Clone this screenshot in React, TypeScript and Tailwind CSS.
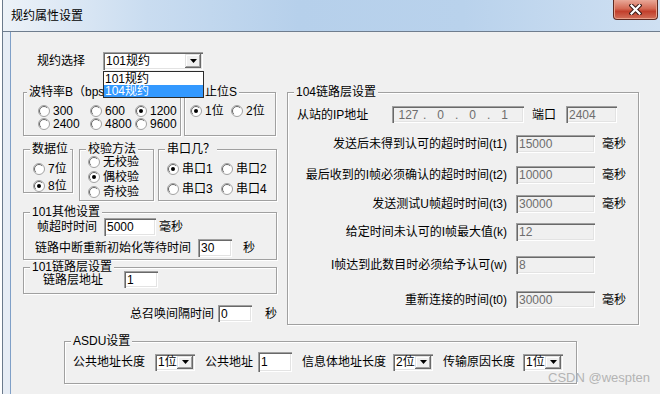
import type { ReactNode } from "react";

// 經典 Win 樣式：凹陷邊框 / 凸起按鈕
const SUNKEN =
  "shadow-[inset_1px_1px_0_#a0a0a0,inset_2px_2px_0_#696969,inset_-1px_-1px_0_#ffffff,inset_-2px_-2px_0_#e3e3e3]";
const RAISED =
  "bg-[#f0f0f0] shadow-[inset_-1px_-1px_0_#696969,inset_1px_1px_0_#e3e3e3,inset_-2px_-2px_0_#a0a0a0,inset_2px_2px_0_#ffffff]";

function Dot({ on }: { on?: boolean }) {
  return (
    <svg width="12" height="12" viewBox="0 0 12 12" className="shrink-0">
      <circle cx="6" cy="6" r="5.5" fill="#fff" stroke="#a0a0a0" />
      <path d="M2.8 9.2A4.5 4.5 0 0 1 9.2 2.8" fill="none" stroke="#696969" />
      {on && <circle cx="6" cy="6" r="2" fill="#000" />}
    </svg>
  );
}

function Radio({ label, on }: { label: string; on?: boolean }) {
  return (
    <div className="flex items-center h-[13px]">
      <Dot on={on} />
      <span className="ml-[3px] whitespace-nowrap">{label}</span>
    </div>
  );
}

function Group({
  title,
  className,
  legendLeft = "left-[6px]",
  children,
}: {
  title: string;
  className: string;
  legendLeft?: string;
  children?: ReactNode;
}) {
  return (
    <div
      className={`relative border border-[#a0a0a0] shadow-[inset_1px_1px_0_#fff,1px_1px_0_#fff] ${className}`}
    >
      <span
        className={`absolute ${legendLeft} -top-[7px] bg-[#f0f0f0] px-[2px] leading-[12px] whitespace-nowrap`}
      >
        {title}
      </span>
      {children}
    </div>
  );
}

function Field({ value, disabled, className }: { value: string; disabled?: boolean; className: string }) {
  return (
    <div
      className={`${SUNKEN} ${
        disabled ? "bg-[#f0f0f0] text-[#6d6d6d]" : "bg-white"
      } flex items-center pl-[3px] shrink-0 ${className}`}
    >
      {value}
    </div>
  );
}

function Arrow() {
  return (
    <svg width="7" height="4" viewBox="0 0 7 4">
      <polygon points="0,0 7,0 3.5,4" fill="#000" />
    </svg>
  );
}

function Combo({ value, className }: { value: string; className: string }) {
  return (
    <div className={`${SUNKEN} bg-white flex p-[2px] shrink-0 ${className}`}>
      <span className="flex-1 flex items-center pl-[1px] whitespace-nowrap">{value}</span>
      <div className={`${RAISED} w-[16px] flex items-center justify-center`}>
        <Arrow />
      </div>
    </div>
  );
}

function TimeRow({
  label,
  value,
  unit,
  mt,
  h = "h-[18px]",
}: {
  label: string;
  value: string;
  unit?: string;
  mt: string;
  h?: string;
}) {
  return (
    <div className={`flex items-center ${mt}`}>
      <span className="w-[219px] text-right whitespace-nowrap">{label}</span>
      <Field value={value} disabled className={`ml-[9px] w-[79px] ${h}`} />
      {unit && <span className="ml-[7px]">{unit}</span>}
    </div>
  );
}

export default function App() {
  return (
    <div className="w-[660px] h-[394px] overflow-hidden bg-[#f0f0f0] relative flex font-['Liberation_Sans','Noto_Sans_CJK_SC',sans-serif] text-[12px] leading-[14px] text-black">
      {/* 視窗左框 */}
      <div className="w-[3px] bg-white border-r border-[#6b7a8c]" />

      <div className="flex-1 flex flex-col">
        {/* 標題列 */}
        <div className="h-[32px] flex items-start justify-between border-b border-[#6f7d8e] bg-[linear-gradient(to_right,#edf2f8_0%,#c9dcf0_22%,#b6d0eb_45%,#b9d2ec_70%,#cfe0f2_100%)]">
          <span className="ml-[8px] mt-[9px] text-[12px] leading-[14px]">规约属性设置</span>
          <div className="mr-[2px] w-[45px] h-[20px] rounded-b-[4px] border border-t-0 border-[#5e2a22] bg-[linear-gradient(to_bottom,#e9a898_0%,#d46a55_45%,#c23f2c_60%,#d2705a_100%)] shadow-[inset_0_-1px_0_#e8a08a,inset_1px_0_0_#e8a08a,inset_-1px_0_0_#e8a08a] flex items-center justify-center">
            <svg width="13" height="11" viewBox="0 0 13 11">
              <path d="M2.5 1.5L10.5 9.5M10.5 1.5L2.5 9.5" stroke="#3a1a16" strokeWidth="4.2" strokeLinecap="square" />
              <path d="M2.5 1.5L10.5 9.5M10.5 1.5L2.5 9.5" stroke="#fff" strokeWidth="2.2" strokeLinecap="square" />
            </svg>
          </div>
        </div>

        <div className="flex-1 flex">
          <div className="w-[7px] bg-[#e7edf5]" />
          <div className="flex-1 border-l border-[#7f9fc7]">
            {/* 規約選擇 */}
            <div className="mt-[20px] ml-[26px] flex items-center h-[18px]">
              <span className="w-[66px]">规约选择</span>
              <div className="relative">
                <Combo value="101规约" className="w-[100px] h-[18px]" />
                <div className="absolute left-0 top-[19px] z-10 w-[101px] border border-[#2b2b2b] bg-white">
                  <div className="h-[13px] pl-[1px] flex items-center">101规约</div>
                  <div className="h-[12px] pl-[1px] flex items-center bg-[#3399ff] text-white">104规约</div>
                </div>
              </div>
            </div>

            <div className="mt-[22px] flex items-start">
              {/* 左欄 */}
              <div className="ml-[12px] w-[254px] flex flex-col">
                <div className="flex gap-[3px]">
                  <Group title="波特率B（bps" legendLeft="left-[3px]" className="w-[158px] h-[44px] pt-[11px] pl-[14px]">
                    <div className="grid grid-cols-[52px_45px_1fr] auto-rows-[13px] items-center">
                      <Radio label="300" />
                      <Radio label="600" />
                      <Radio label="1200" on />
                      <Radio label="2400" />
                      <Radio label="4800" />
                      <Radio label="9600" />
                    </div>
                  </Group>
                  <Group title="止位S" legendLeft="left-[18px]" className="w-[92px] h-[44px] pt-[11px] pl-[5px]">
                    <div className="flex h-[13px] items-center">
                      <div className="w-[41px]">
                        <Radio label="1位" on />
                      </div>
                      <Radio label="2位" />
                    </div>
                  </Group>
                </div>

                <div className="mt-[13px] flex items-start">
                  <Group title="数据位" className="w-[50px] h-[44px] pt-[12px] pl-[9px] flex flex-col gap-[4px]">
                    <Radio label="7位" />
                    <Radio label="8位" on />
                  </Group>
                  <Group title="校验方法" className="ml-[6px] w-[75px] h-[52px] pt-[5px] pl-[8px] flex flex-col gap-[2px]">
                    <Radio label="无校验" />
                    <Radio label="偶校验" on />
                    <Radio label="奇校验" />
                  </Group>
                  <Group title="串口几？" className="ml-[4px] w-[119px] h-[52px] pt-[12px] pl-[8px]">
                    <div className="grid grid-cols-[54px_1fr] gap-y-[7px]">
                      <Radio label="串口1" on />
                      <Radio label="串口2" />
                      <Radio label="串口3" />
                      <Radio label="串口4" />
                    </div>
                  </Group>
                </div>

                <Group title="101其他设置" className="mt-[11px] h-[48px] pt-[5px]">
                  <div className="flex items-center pl-[13px]">
                    <span className="w-[67px]">帧超时时间</span>
                    <Field value="5000" className="w-[52px] h-[18px]" />
                    <span className="ml-[3px]">毫秒</span>
                  </div>
                  <div className="flex items-center pl-[11px] mt-[3px]">
                    <span className="w-[163px] whitespace-nowrap">链路中断重新初始化等待时间</span>
                    <Field value="30" className="w-[34px] h-[18px]" />
                    <span className="ml-[11px]">秒</span>
                  </div>
                </Group>

                <Group title="101链路层设置" className="mt-[7px] h-[27px] pt-[3px]">
                  <div className="flex items-center pl-[19px]">
                    <span className="w-[81px]">链路层地址</span>
                    <Field value="1" className="w-[34px] h-[17px]" />
                  </div>
                </Group>

                <div className="mt-[11px] flex items-center pl-[107px]">
                  <span className="w-[89px] whitespace-nowrap">总召唤间隔时间</span>
                  <Field value="0" className="w-[34px] h-[17px]" />
                  <span className="ml-[13px]">秒</span>
                </div>
              </div>

              {/* 右欄 104 */}
              <Group title="104链路层设置" className="ml-[10px] w-[352px] h-[233px] pt-[13px]">
                <div className="flex items-center pl-[9px]">
                  <span className="w-[95px] whitespace-nowrap">从站的IP地址</span>
                  <div className={`${SUNKEN} bg-[#f0f0f0] text-[#6d6d6d] w-[132px] h-[17px] flex items-center pl-[2px]`}>
                    <span className="w-[29px] text-center">127</span>
                    <span className="w-[3px]">.</span>
                    <span className="w-[29px] text-center">0</span>
                    <span className="w-[3px]">.</span>
                    <span className="w-[29px] text-center">0</span>
                    <span className="w-[3px]">.</span>
                    <span className="w-[29px] text-center">1</span>
                  </div>
                  <span className="ml-[8px]">端口</span>
                  <Field value="2404" disabled className="ml-[10px] w-[51px] h-[17px]" />
                </div>
                <TimeRow mt="mt-[12px]" label="发送后未得到认可的超时时间(t1)" value="15000" unit="毫秒" />
                <TimeRow mt="mt-[13px]" label="最后收到的I帧必须确认的超时时间(t2)" value="10000" unit="毫秒" />
                <TimeRow mt="mt-[11px]" label="发送测试U帧超时时间(t3)" value="30000" unit="毫秒" />
                <TimeRow mt="mt-[10px]" label="给定时间未认可的I帧最大值(k)" value="12" />
                <TimeRow mt="mt-[15px]" label="I帧达到此数目时必须给予认可(w)" value="8" />
                <TimeRow mt="mt-[17px]" h="h-[17px]" label="重新连接的时间(t0)" value="30000" unit="毫秒" />
              </Group>
            </div>

            {/* ASDU */}
            <Group title="ASDU设置" className="mt-[16px] ml-[53px] w-[513px] h-[43px] pt-[10px]">
              <div className="flex items-center pl-[8px] h-[20px]">
                <span className="w-[82px] whitespace-nowrap">公共地址长度</span>
                <Combo value="1位" className="w-[40px] h-[17px]" />
                <span className="ml-[10px] w-[53px] whitespace-nowrap">公共地址</span>
                <Field value="1" className="w-[34px] h-[20px]" />
                <span className="ml-[10px] w-[91px] whitespace-nowrap">信息体地址长度</span>
                <Combo value="2位" className="w-[40px] h-[17px]" />
                <span className="ml-[10px] w-[80px] whitespace-nowrap">传输原因长度</span>
                <Combo value="1位" className="w-[40px] h-[17px]" />
              </div>
            </Group>
          </div>
        </div>
      </div>

      {/* 水印 */}
      <span className="absolute left-[548px] top-[370px] text-[13px] leading-[16px] text-[#b4b4b4] whitespace-nowrap">
        CSDN @wespten
      </span>
    </div>
  );
}
